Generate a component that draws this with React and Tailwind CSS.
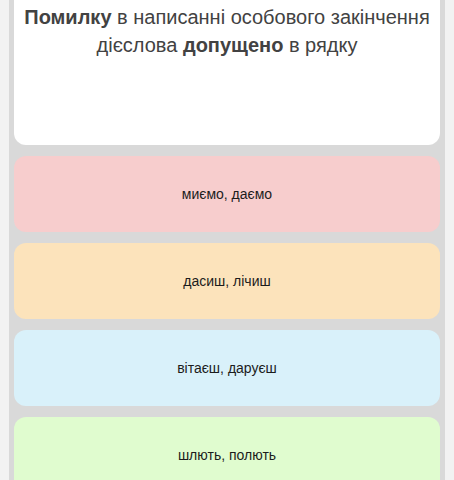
export default function App() {
  const options = [
    { text: "миємо, даємо", bg: "bg-[#f7cdcd]" },
    { text: "дасиш, лічиш", bg: "bg-[#fce3bb]" },
    { text: "вітаєш, даруєш", bg: "bg-[#d9f1fa]" },
    { text: "шлють, полють", bg: "bg-[#e0fccf]" },
  ];
  return (
    <div className="h-[480px] overflow-hidden bg-[#f2f2f2] pl-[9px] pr-[9px]" style={{ fontFamily: '"Liberation Sans", Arial, sans-serif' }}>
      <div className="flex h-full flex-col bg-[#d9d9d9] px-[5px]">
        <div className="-mt-[14px] h-[159px] shrink-0 rounded-xl bg-white px-2 pt-[17px] text-center text-[20px] leading-[28px] text-[#424242]">
          <b className="font-bold">Помилку</b> в написанні особового закінчення дієслова <b className="font-bold">допущено</b> в рядку
        </div>
        <div className="mt-[11px] flex flex-col gap-[11px]">
          {options.map((o) => (
            <div key={o.text} className={`flex h-[76px] shrink-0 items-center justify-center rounded-xl ${o.bg} text-[14px] text-[#1c1c1c]`}>
              {o.text}
            </div>
          ))}
        </div>
      </div>
    </div>
  );
}
